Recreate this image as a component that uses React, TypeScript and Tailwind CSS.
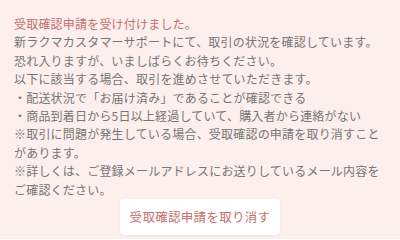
const lines = [
  '新ラクマカスタマーサポートにて、取引の状況を確認しています。',
  '恐れ入りますが、いましばらくお待ちください。',
  '以下に該当する場合、取引を進めさせていただきます。',
  '・配送状況で「お届け済み」であることが確認できる',
  '・商品到着日から5日以上経過していて、購入者から連絡がない',
  '※取引に問題が発生している場合、受取確認の申請を取り消すこと',
  'があります。',
  '※詳しくは、ご登録メールアドレスにお送りしているメール内容を',
  'ご確認ください。',
];

const App = () => {
  return (
    <div
      className="w-[400px] h-[239px] bg-[#fcefec] overflow-hidden"
      style={{ fontFamily: '"Noto Sans CJK JP", "Noto Sans", sans-serif' }}
    >
      <div className="pl-[14px] pt-[15px] text-[12px] leading-[18.4px] tracking-[0.2px] whitespace-nowrap">
        <p className="text-[#c4706e]">受取確認申請を受け付けました。</p>
        {lines.map((line) => (
          <p key={line} className="text-[#767676]">
            {line}
          </p>
        ))}
      </div>
      <div className="flex justify-center">
        <button className="w-[160px] h-[36px] rounded-[4px] bg-white shadow-[0_1px_3px_rgba(0,0,0,0.06)] text-[12.5px] tracking-[0.3px] text-[#c4706e]">
          受取確認申請を取り消す
        </button>
      </div>
    </div>
  );
};

export default App;
